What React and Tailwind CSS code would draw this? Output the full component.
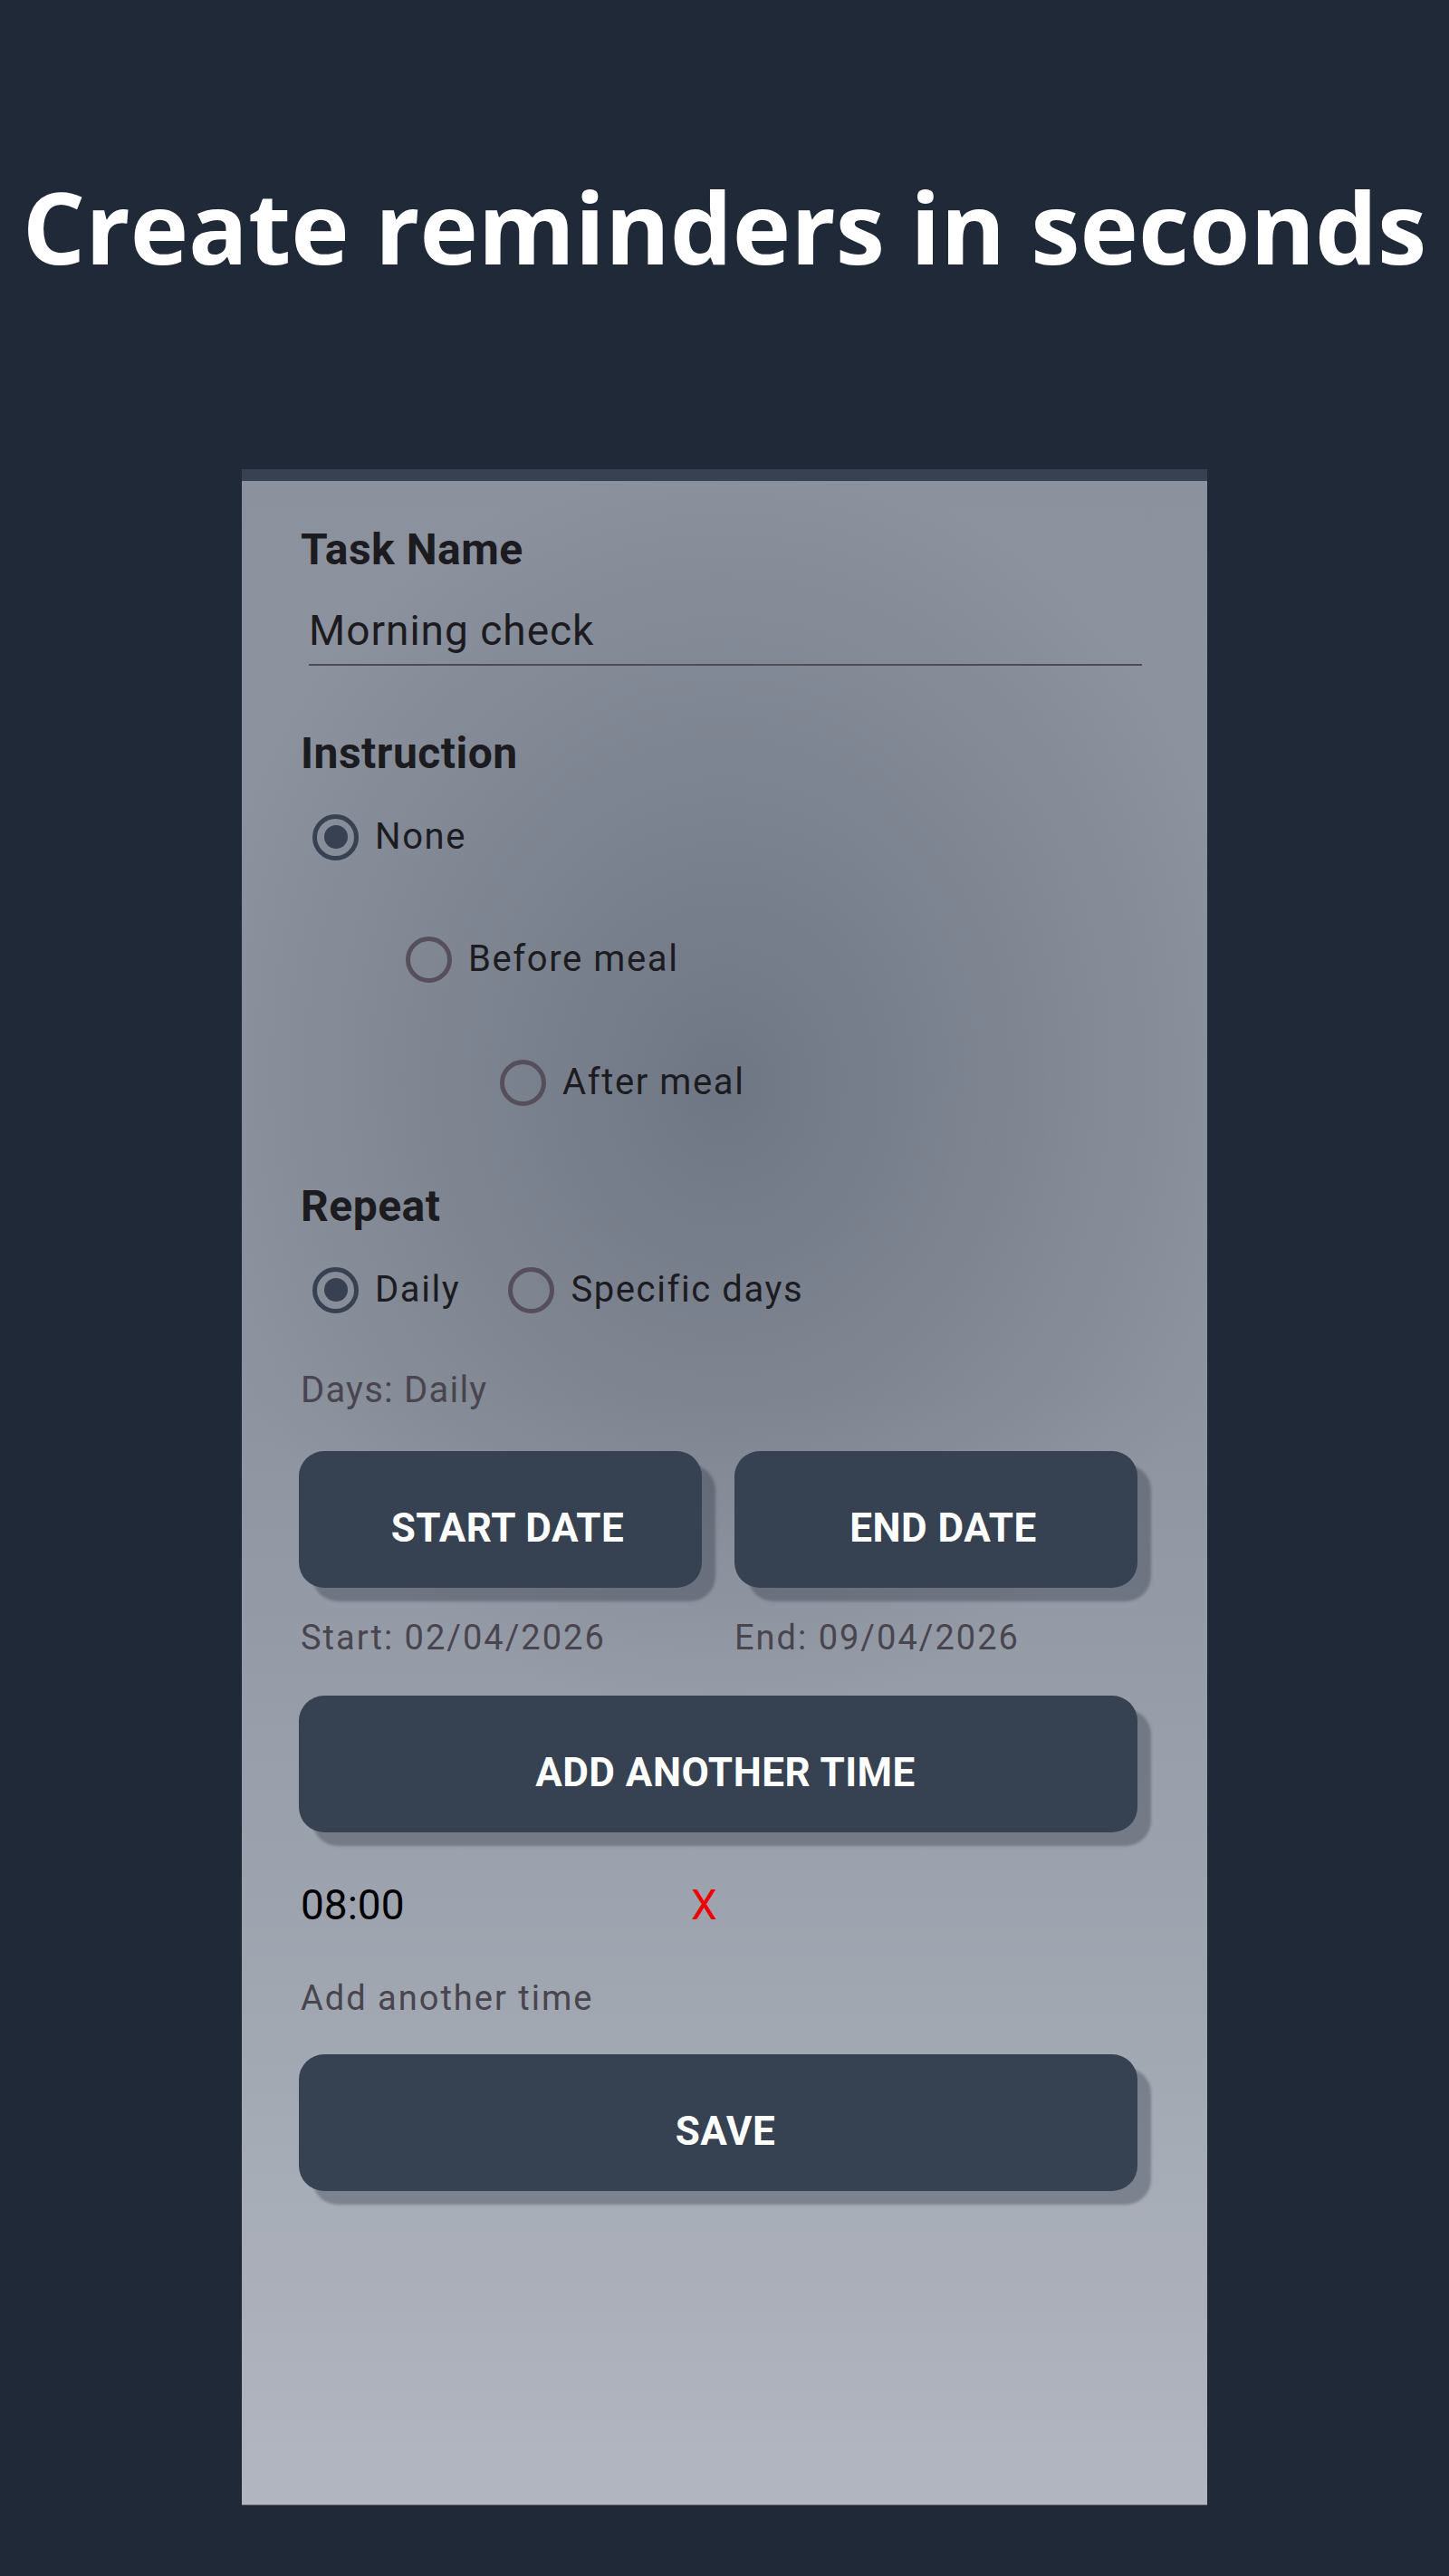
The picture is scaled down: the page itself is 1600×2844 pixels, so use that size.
import React from 'react';

const Radio = ({ label, checked, className = '' }) => (
  <div className={`flex items-center h-[60px] ${className}`}>
    <span
      className={`w-[51px] h-[51px] rounded-full border-[5px] flex items-center justify-center shrink-0 ${checked ? 'border-[#374151]' : 'border-[#544f5a]'}`}
    >
      {checked && <span className="w-[26px] h-[26px] rounded-full bg-[#374151]" />}
    </span>
    <span className="ml-[18px] text-[40px] leading-[40px] tracking-[1.6px] text-[#1c1b1f]">{label}</span>
  </div>
);

const DarkButton = ({ children, className = '' }) => (
  <button
    className={`h-[151px] pt-[19px] pl-[16px] rounded-[28px] bg-[#364152] text-white font-bold text-[44px] leading-none tracking-[0.5px] shadow-[15px_15px_3px_rgba(35,40,55,0.32)] ${className}`}
  >
    {children}
  </button>
);

const Heading = ({ children, className = '' }) => (
  <h2 className={`ml-[2px] text-[48px] leading-[48px] font-bold tracking-[0.5px] text-[#1c1b1f] ${className}`}>{children}</h2>
);

export default function App() {
  return (
    <div className="min-h-[2844px] bg-[#1f2937] flex flex-col items-center font-['Roboto','Noto_Sans',sans-serif]">
      <h1 className="mt-[196px] text-[109px] leading-[108px] font-bold text-white whitespace-nowrap font-['Open_Sans','Noto_Sans',sans-serif]">
        Create reminders in seconds
      </h1>

      <div className="mt-[214px] w-[1066px] h-[2248px] flex flex-col border-b border-[#6b7280]">
        <div className="h-[13px] bg-[#374151]" />
        <div className="flex-1 flex flex-col px-[63px] pt-[52px] bg-[radial-gradient(ellipse_600px_700px_at_50%_30%,rgba(88,95,110,0.55),rgba(88,95,110,0)),linear-gradient(to_bottom,#8b929e_0%,#8d949f_45%,#b1b6c0_100%)]">
          <Heading>Task Name</Heading>

          <div className="mt-[42px] ml-[11px] w-[920px] pb-[14px] border-b-2 border-[#4f4b56]">
            <span className="text-[46px] leading-[46px] tracking-[1px] text-[#1c1b1f]">Morning check</span>
          </div>

          <Heading className="mt-[73px]">Instruction</Heading>

          <Radio label="None" checked className="mt-[38px] ml-[15px]" />
          <Radio label="Before meal" className="mt-[75px] ml-[118px]" />
          <Radio label="After meal" className="mt-[76px] ml-[222px]" />

          <Heading className="mt-[83px]">Repeat</Heading>

          <div className="mt-[38px] ml-[15px] flex items-center">
            <Radio label="Daily" checked />
            <Radio label="Specific days" className="ml-[53px]" />
          </div>

          <p className="mt-[61px] ml-[2px] text-[40px] leading-[40px] tracking-[1.2px] text-[#49454f]">Days: Daily</p>

          <div className="mt-[47px] w-[926px] grid grid-cols-2 gap-x-[36px]">
            <DarkButton>START DATE</DarkButton>
            <DarkButton>END DATE</DarkButton>
            <p className="mt-[36px] ml-[2px] text-[38px] leading-[38px] tracking-[2px] text-[#49454f]">Start: 02/04/2026</p>
            <p className="mt-[36px] text-[38px] leading-[38px] tracking-[2px] text-[#49454f]">End: 09/04/2026</p>
          </div>

          <DarkButton className="mt-[45px] w-[926px]">ADD ANOTHER TIME</DarkButton>

          <div className="mt-[57px] ml-[2px] flex items-center text-[46px] leading-[46px]">
            <span className="w-[431px] text-black">08:00</span>
            <span className="text-[#ee0000]">X</span>
          </div>

          <p className="mt-[61px] ml-[2px] text-[38px] leading-[38px] tracking-[2px] text-[#49454f]">Add another time</p>

          <DarkButton className="mt-[43px] w-[926px]">SAVE</DarkButton>
        </div>
      </div>
    </div>
  );
}
